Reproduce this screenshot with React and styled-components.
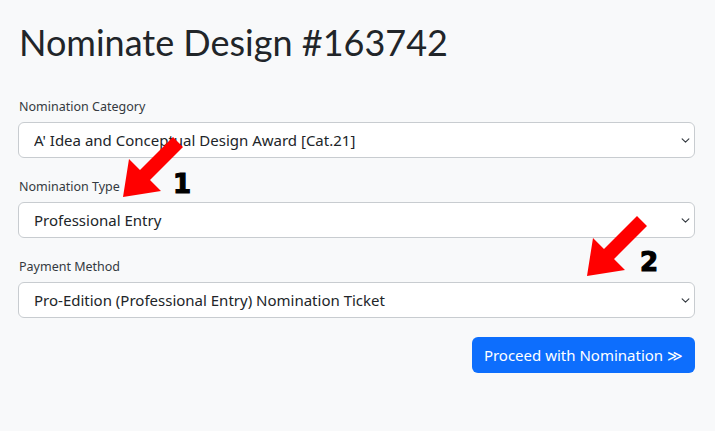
import styled, { createGlobalStyle } from "styled-components";

const GlobalStyle = createGlobalStyle`
  html, body {
    margin: 0;
    padding: 0;
    background: #f8f9fa;
  }
  body {
    font-family: "Noto Sans", "Open Sans", sans-serif;
    color: #212529;
  }
`;

const chevron =
  "url(\"data:image/svg+xml,%3csvg xmlns='http://www.w3.org/2000/svg' viewBox='0 0 16 16'%3e%3cpath fill='none' stroke='%23343a40' stroke-linecap='round' stroke-linejoin='round' stroke-width='2' d='m2 5 6 6 6-6'/%3e%3c/svg%3e\")";

const Page = styled.div`
  position: relative;
  width: 715px;
  height: 431px;
  box-sizing: border-box;
  padding: 18px 20px 0 18px;
`;

const Title = styled.h1`
  margin: 0 0 31px 1px;
  font-family: "Lato", "Noto Sans", sans-serif;
  font-weight: 400;
  font-size: 36px;
  line-height: 48px;
  letter-spacing: 0;
  color: #212529;
`;

const Form = styled.div`
  display: flex;
  flex-direction: column;
  gap: 19px;
`;

const Group = styled.div`
  display: flex;
  flex-direction: column;
  gap: 6px;
`;

const Label = styled.label`
  font-size: 12.5px;
  line-height: 19px;
  color: #343a40;
  padding-left: 1px;
`;

const Select = styled.select`
  appearance: none;
  width: 100%;
  height: 36px;
  box-sizing: border-box;
  padding: 0 36px 0 15px;
  border: 1px solid #c8ccd0;
  border-radius: 6px;
  background-color: #fff;
  background-image: ${chevron};
  background-repeat: no-repeat;
  background-position: right 4px center;
  background-size: 9px 9px;
  font-family: "Noto Sans", "Open Sans", sans-serif;
  font-size: 15px;
  color: #212529;
`;

const Actions = styled.div`
  display: flex;
  justify-content: flex-end;
`;

const Button = styled.button`
  height: 36px;
  padding: 0 12px;
  border: none;
  border-radius: 6px;
  background: #0d6efd;
  color: #fff;
  font-family: "Noto Sans", "Open Sans", sans-serif;
  font-size: 15px;
`;

const Marker = styled.div`
  position: absolute;
  left: ${(p) => p.$x}px;
  top: ${(p) => p.$y}px;
  display: flex;
  align-items: flex-end;
  pointer-events: none;
`;

const Num = styled.span`
  font-family: "DejaVu Sans", sans-serif;
  font-weight: 900;
  font-size: 26px;
  line-height: 26px;
  color: #000;
  margin-left: ${(p) => p.$gap}px;
  margin-bottom: ${(p) => p.$lift}px;
  -webkit-text-stroke: 1.2px #000;
`;

function Arrow() {
  // shaft from top-right, head pointing down-left
  return (
    <svg width="60" height="60" viewBox="0 0 60 60">
      <polygon
        points="0,60 6,22 17,33 50,0 60,10 27,43 38,54"
        fill="#ff0000"
      />
    </svg>
  );
}

const fields = [
  { label: "Nomination Category", value: "A' Idea and Conceptual Design Award [Cat.21]" },
  { label: "Nomination Type", value: "Professional Entry" },
  { label: "Payment Method", value: "Pro-Edition (Professional Entry) Nomination Ticket" },
];

export default function App() {
  return (
    <>
      <GlobalStyle />
      <Page>
        <Title>Nominate Design #163742</Title>
        <Form>
          {fields.map((f) => (
            <Group key={f.label}>
              <Label>{f.label}</Label>
              <Select defaultValue={f.value}>
                <option>{f.value}</option>
              </Select>
            </Group>
          ))}
          <Actions>
            <Button>Proceed with Nomination ≫</Button>
          </Actions>
        </Form>
        <Marker $x={123} $y={137}>
          <Arrow />
          <Num $gap={-10} $lift={0}>1</Num>
        </Marker>
        <Marker $x={587} $y={216}>
          <Arrow />
          <Num $gap={-7} $lift={1}>2</Num>
        </Marker>
      </Page>
    </>
  );
}
